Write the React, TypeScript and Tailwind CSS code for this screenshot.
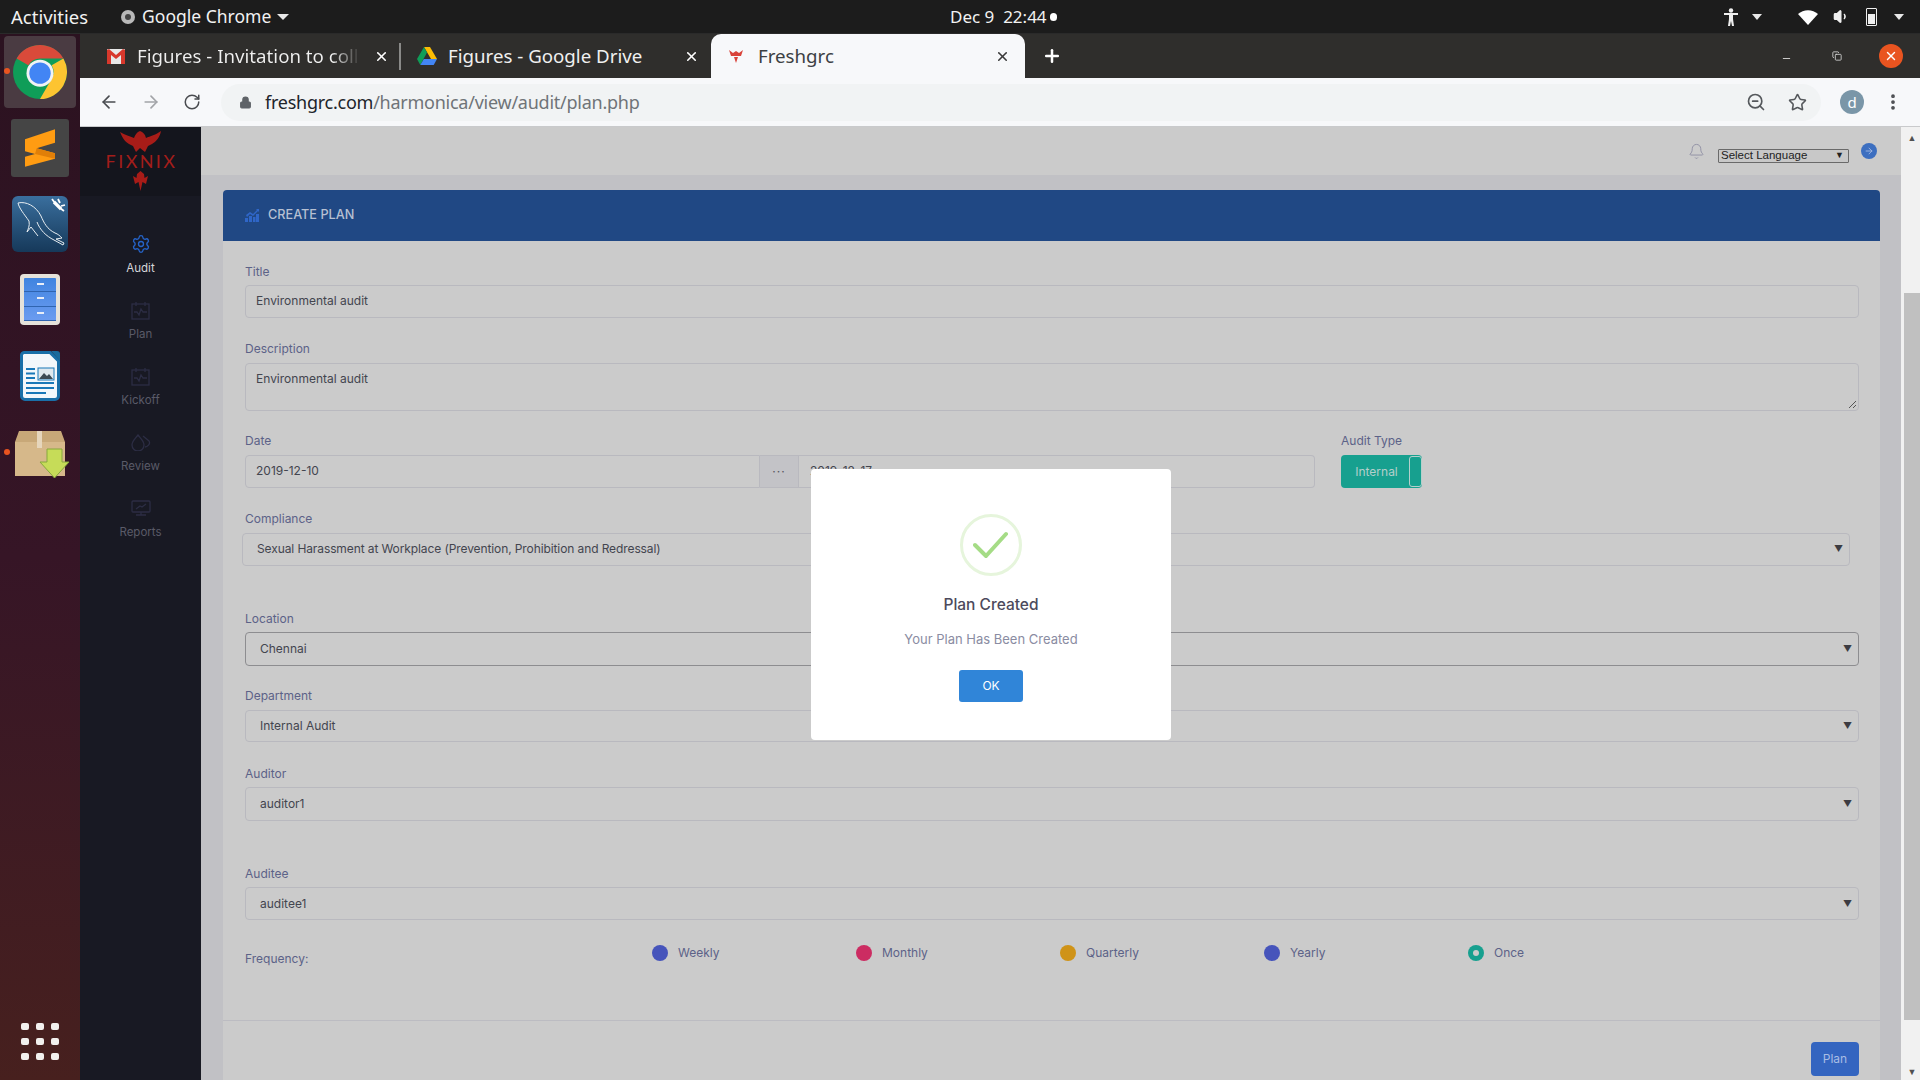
import React from "react";
import { ArrowLeft, ArrowRight, RotateCw, Lock, X, Plus, Star, ZoomOut, Bell, Settings, Volume1, Minus, Copy, MoreVertical } from "lucide-react";

const POP = "font-['Inter','Liberation_Sans',sans-serif]";

function ChromeLogo({ size }: { size: number }) {
  return (
    <svg width={size} height={size} viewBox="0 0 48 48">
      <circle cx="24" cy="24" r="24" fill="#0f9d58" />
      <path d="M44.8 12A24 24 0 0 1 24 48L34.4 30a12 12 0 0 0 0-12z" fill="#fdc431" />
      <path d="M24 0A24 24 0 0 1 44.800 12H24a12 12 0 0 0-10.400 6L3.200 12A24 24 0 0 1 24 0z" fill="#d94a3a" />
      <circle cx="24" cy="25" r="12" fill="#f1f3f4" />
      <circle cx="24" cy="25" r="9.500" fill="#4285f4" />
    </svg>
  );
}

function Dock() {
  return (
    <div className="w-[80px] shrink-0 flex flex-col items-center relative bg-gradient-to-b from-[#2b1220] via-[#361526] to-[#47201e]">
      <div className="mt-[2px] w-[72px] h-[72px] rounded-[4px] bg-[#4a3b42] flex items-center justify-center">
        <ChromeLogo size={54} />
      </div>
      <div className="absolute left-[4px] top-[34px] w-[6px] h-[6px] rounded-full bg-[#e95420]" />
      <div className="mt-[11px] w-[58px] h-[58px] rounded-[3px] bg-[#454545] flex items-center justify-center">
        <svg width="30" height="38" viewBox="0 0 90 112">
          <path d="M90 0L0 30V66L30 74L0 82V112L90 88V72L35 57L90 40z" fill="#ff9c12" />
          <path d="M35 57L90 72V88L30 74z" fill="#e07f08" />
        </svg>
      </div>
      <div className="mt-[19px] w-[56px] h-[56px] rounded-[6px] bg-gradient-to-b from-[#3a6f9e] to-[#16395a] relative">
        <svg width="56" height="56" viewBox="0 0 56 56" fill="none" stroke="#e8eef2" strokeWidth="1">
          <path d="M6 7C14 5 24 10 29 20C32 27 35 33 43 37C46 38 48 40 50 42L44 43L52 47L51 49L42 44C34 40 28 34 25 26" />
          <path d="M6 7C7 12 12 18 17 25C18 30 16 33 15 36L19 31L26 40" />
          <path d="M42 6l7 7" stroke="#fff" strokeWidth="3.200" />
          <path d="M40 3l3 4M52 15l-4-3M46 3l2 4M53 9l-4 1" stroke="#fff" strokeWidth="1.800" />
        </svg>
      </div>
      <div className="mt-[22px] w-[40px] h-[51px] rounded-[4px] bg-[#e5e2da] flex items-center justify-center">
        <div className="w-[32px] h-[43px] bg-gradient-to-b from-[#3f84e0] to-[#6b9cf0] flex flex-col rounded-[1px]">
          {[0, 1, 2].map((i) => (
            <div key={i} className="flex-1 border-b border-[#2f64b0] flex items-start justify-center pt-[5px]">
              <div className="w-[7px] h-[2px] bg-[#e8eef8]" />
            </div>
          ))}
        </div>
      </div>
      <div className="mt-[26px] w-[40px] h-[50px]">
        <svg width="40" height="50" viewBox="0 0 40 50">
          <path d="M4 1.500H30L38.500 10V45a3.500 3.500 0 0 1-3.500 3.500H5A3.500 3.500 0 0 1 1.500 45V4A3 3 0 0 1 4 1.500z" fill="#f3f7fb" stroke="#1a6fa8" strokeWidth="3" />
          <path d="M31 0h6a3 3 0 0 1 3 3v7z" fill="#1a6a9c" />
          <path d="M6 17h9v2H6zM6 21.500h9v2H6zM6 26h9v2H6zM6 31h28v2H6zM6 36h28v2H6zM6 41h20v2H6z" fill="#1a78b8" />
          <rect x="18" y="17" width="16" height="12" fill="#dfe8ee" stroke="#1a78b8" />
          <path d="M19 28l5-6 3 3 2-2 4 5z" fill="#3c4a54" />
        </svg>
      </div>
      <div className="absolute left-[4px] top-[415px] w-[6px] h-[6px] rounded-full bg-[#e95420]" />
      <div className="absolute left-[14px] top-[397px] w-[56px] h-[48px]">
        <svg width="56" height="48" viewBox="0 0 56 48">
          <path d="M1 11L5 0h42l4 11v34H1z" fill="#c8a878" />
          <path d="M1 11h50v34H1z" fill="#d6b88a" />
          <rect x="23" y="0" width="5" height="17" fill="#e6d6bc" />
          <path d="M33 18h15v13h7L40.500 47L26 31h7z" fill="#c6dc58" stroke="#86a83c" />
        </svg>
      </div>
      <div className="mt-auto mb-[20px] grid grid-cols-3 gap-x-[7px] gap-y-[8px]">
        {Array.from({ length: 9 }).map((_, i) => (
          <div key={i} className="w-[8px] h-[7px] rounded-[2px] bg-[#f2f0ee]" />
        ))}
      </div>
    </div>
  );
}

function TopBar() {
  return (
    <div className="h-[34px] shrink-0 bg-[#1c1c1c] text-[#f2f2f2] flex items-center text-[17.500px] font-['Noto_Sans',sans-serif] relative border-b border-[#2a2a2a]">
      <span className="ml-[11px] text-[18.500px]">Activities</span>
      <span className="ml-[33px] w-[14px] h-[14px] rounded-full bg-[#b9b9b9] flex items-center justify-center">
        <span className="w-[6px] h-[6px] rounded-full bg-[#444]" />
      </span>
      <span className="ml-[7px]">Google Chrome</span>
      <span className="ml-[6px] w-0 h-0 border-x-[6px] border-x-transparent border-t-[6px] border-t-[#e8e8e8]" />
      <div className="absolute left-[950px] top-0 h-full flex items-center text-[17px]">
        <span className="whitespace-pre">Dec 9  22:44</span>
        <span className="ml-[3px] w-[7px] h-[8px] rounded-full bg-white" />
      </div>
      <div className="ml-auto flex items-center text-[#efefef]">
        <svg width="14" height="18" viewBox="0 0 14 18" fill="#efefef" className="mr-[14px]">
          <circle cx="7" cy="2.500" r="2.200" />
          <path d="M0 5h14v2H9v4l1 7H8l-1-5-1 5H4l1-7V7H0z" />
        </svg>
        <span className="mr-[36px] w-0 h-0 border-x-[5px] border-x-transparent border-t-[6px] border-t-[#e8e8e8]" />
        <svg width="20" height="16" viewBox="0 0 20 16" fill="#fff" className="mr-[15px]">
          <path d="M0 5a15 15 0 0 1 20 0l-10 11z" />
        </svg>
        <Volume1 size={17} className="mr-[16px]" fill="#efefef" />
        <div className="mr-[17px] w-[11px] h-[18px] border-[1.500px] border-[#efefef] rounded-[1px] flex items-end p-[1px]">
          <div className="w-full h-[10px] bg-[#efefef]" />
        </div>
        <span className="mr-[16px] w-0 h-0 border-x-[5px] border-x-transparent border-t-[6px] border-t-[#e8e8e8]" />
      </div>
    </div>
  );
}

function TabStrip() {
  return (
    <div className="h-[44px] shrink-0 bg-[#2f2e2c] flex items-stretch pl-[16px] text-[18.700px] font-['Noto_Sans',sans-serif] text-[#f0f0f0] relative">
      <div className="w-[305px] flex items-center pl-[11px] pr-[12px]">
        <svg width="18" height="15" viewBox="0 0 18 15" className="shrink-0">
          <rect width="18" height="15" rx="1" fill="#e8e8e8" />
          <path d="M0 1v14h4V6l5 4 5-4v9h4V1l-2-1-7 6L2 0z" fill="#d8382c" />
        </svg>
        <span className="ml-[12px] whitespace-nowrap bg-clip-text text-transparent bg-gradient-to-r from-[#f0f0f0] from-[88%] to-[#3a3937]">Figures - Invitation to coll</span>
        <X size={15} strokeWidth={2.500} className="ml-auto shrink-0 text-white" />
      </div>
      <div className="w-[2px] h-[27px] self-center bg-[#8a8a88] -ml-[2px]" />
      <div className="w-[310px] flex items-center pl-[16px] pr-[12px]">
        <svg width="20" height="18" viewBox="0 0 20 18" className="shrink-0">
          <path d="M7 0h6l7 12h-6z" fill="#fbbc04" />
          <path d="M7 0l3 5.500L3.300 18 0 12z" fill="#0f9d58" />
          <path d="M3.300 18l3.500-6H20l-3.300 6z" fill="#4285f4" />
        </svg>
        <span className="ml-[11px] whitespace-nowrap">Figures - Google Drive</span>
        <X size={15} strokeWidth={2.500} className="ml-auto shrink-0 text-white" />
      </div>
      <div className="w-[314px] bg-[#f7f8fa] rounded-t-[10px] flex items-center pl-[18px] pr-[15px] text-[#3c4043]">
        <svg width="14" height="14" viewBox="0 0 14 14" className="shrink-0">
          <path d="M0 1l4 3 3-2 3 2 4-3-2 6H2zM5 8h4l-2 6z" fill="#d9433a" />
        </svg>
        <span className="ml-[15px]">Freshgrc</span>
        <X size={15} strokeWidth={2.500} className="ml-auto shrink-0 text-[#3a3a3a]" />
      </div>
      <Plus size={20} strokeWidth={3} className="self-center ml-[17px] text-white" />
      <div className="ml-auto flex items-center pr-[17px]">
        <Minus size={11} className="text-[#d8d8d8] mt-[5px] mr-[40px]" />
        <Copy size={10} className="text-[#d8d8d8] mr-[37px]" />
        <div className="w-[24px] h-[24px] rounded-full bg-[#e95420] flex items-center justify-center">
          <X size={14} strokeWidth={2.500} className="text-white" />
        </div>
      </div>
    </div>
  );
}

function AddressBar() {
  return (
    <div className="h-[49px] shrink-0 bg-[#f7f8fa] border-b border-[#c9cacc] flex items-center pl-[19px] font-['Noto_Sans',sans-serif]">
      <ArrowLeft size={20} strokeWidth={2} className="text-[#4a4c50]" />
      <ArrowRight size={20} strokeWidth={2} className="ml-[22px] text-[#a2a4a8]" />
      <RotateCw size={18} strokeWidth={2} className="ml-[22px] text-[#4a4c50]" />
      <div className="ml-[20px] w-[1600px] h-[37px] rounded-full bg-[#f1f3f4] flex items-center pl-[18px] pr-[14px]">
        <Lock size={13} fill="#5f6368" className="text-[#5f6368]" />
        <span className="ml-[13px] text-[18px] text-[#20242a] whitespace-nowrap tracking-[-0.250px]">
          freshgrc.com<span className="text-[#6f7478]">/harmonica/view/audit/plan.php</span>
        </span>
        <ZoomOut size={20} className="ml-auto text-[#55585c]" />
        <Star size={19} className="ml-[22px] text-[#55585c]" />
      </div>
      <div className="ml-[19px] w-[24px] h-[24px] rounded-full bg-[#7a96a8] text-white text-[15px] flex items-center justify-center">d</div>
      <MoreVertical size={20} strokeWidth={2.500} className="ml-[19px] text-[#4a4c50]" />
    </div>
  );
}

function Cal() {
  return (
    <svg width="19" height="19" viewBox="0 0 19 19" fill="none" stroke="#2c2d44" strokeWidth="1.300">
      <rect x="1" y="3" width="17" height="15" />
      <path d="M5 1v4M14 1v4M3 11h3l2 3 2-6 2 3h4" />
    </svg>
  );
}

function NavItem({ icon, label, active, cls }: { icon: React.ReactNode; label: string; active?: boolean; cls: string }) {
  return (
    <div className={`flex flex-col items-center ${cls}`}>
      <div className="h-[22px] flex items-center justify-center">{icon}</div>
      <span className={`mt-[6px] text-[11.500px] leading-[14px] ${POP} ${active ? "text-[#d5d6da]" : "text-[#5a5b68]"}`}>{label}</span>
    </div>
  );
}

function Sidebar() {
  return (
    <div className="w-[121px] shrink-0 bg-[#181923] flex flex-col">
      <div className="h-[69px] bg-[#14151d] flex flex-col items-center pt-[4px]">
        <svg width="41" height="21" viewBox="0 0 41 21" fill="#a81c18">
          <path d="M0 1C5 4 10 5 14 7C15 4 17 1 20 0C23 1 25 3 26 7C30 5 36 4 41 0C40 6 36 11 32 13L28 15L25 21L20 17L16 21L13 15L9 13C5 11 2 6 0 1z" />
        </svg>
        <span className="mt-[3px] text-[#a31d1a] text-[18px] leading-[13px] font-normal font-['Lato',sans-serif] tracking-[2.400px] pl-[2px]">FIXNIX</span>
        <svg width="15" height="20" viewBox="0 0 15 20" fill="#a81c18" className="mt-[3px]">
          <path d="M7.500 20L5.500 11L2 13L0 5L3.500 7L4 3L7.500 0L11 3L11.500 7L15 5L13 13L9.500 11z" />
        </svg>
      </div>
      <NavItem cls="mt-[37px]" active label="Audit" icon={<Settings size={20} strokeWidth={1.600} className="text-[#2563c8]" />} />
      <NavItem cls="mt-[24px]" label="Plan" icon={<Cal />} />
      <NavItem cls="mt-[24px]" label="Kickoff" icon={<Cal />} />
      <NavItem cls="mt-[24px]" label="Review" icon={
        <svg width="20" height="18" viewBox="0 0 20 18" fill="none" stroke="#2c2d44" strokeWidth="1.300">
          <path d="M7 2c3 4 6 6 6 10a6 6 0 0 1-12 0c0-4 3-6 6-10zM12 3l6 5c2 3-2 6-4 6" />
        </svg>
      } />
      <NavItem cls="mt-[24px]" label="Reports" icon={
        <svg width="20" height="16" viewBox="0 0 20 16" fill="none" stroke="#2c2d44" strokeWidth="1.300">
          <rect x="1" y="1" width="18" height="11" rx="1" />
          <path d="M5 9l4-3 2 1 4-3M10 12v3M5 15h10" />
        </svg>
      } />
    </div>
  );
}

function Lbl({ children, cls }: { children: React.ReactNode; cls?: string }) {
  return <div className={`h-[16px] text-[12px] leading-[16px] text-[#5c6288] ${cls ?? ""}`}>{children}</div>;
}

function Sel({ value, cls, arrow }: { value: string; cls: string; arrow?: string }) {
  return (
    <div className={`flex items-center rounded-[4px] border text-[12px] text-[#43454f] ${cls}`}>
      <span className="flex-1">{value}</span>
      <span className={`text-[9px] text-[#3c3c42] ${arrow ?? "mr-[6px]"}`}>▼</span>
    </div>
  );
}

function Radio({ color, label, checked }: { color: string; label: string; checked?: boolean }) {
  return (
    <div className="w-[204px] flex items-center">
      <span className={`w-[16px] h-[16px] rounded-full flex items-center justify-center ${color}`}>
        {checked && <span className="w-[6px] h-[6px] rounded-full bg-[#cbcbcb]" />}
      </span>
      <span className="ml-[10px] text-[12px] leading-[16px] text-[#5c6288]">{label}</span>
    </div>
  );
}

function Form() {
  const border = "border-[#b9b9bf]";
  return (
    <div className={`flex-1 min-h-0 overflow-hidden bg-[#c1c1c5] pl-[22px] pr-[21px] pt-[15px] ${POP}`}>
      <div className="bg-[#cbcbcb] rounded-t-[4px] h-[1000px]">
        <div className="h-[51px] rounded-t-[4px] bg-[#204884] flex items-center pl-[22px]">
          <svg width="14" height="13" viewBox="0 0 14 13" fill="#2f66c8">
            <path d="M0 9h3v4H0zM4 7h3v6H4zM8 8h2.500v5H8zM11 5h3v8h-3zM1 6l4-3 3 2 4-4-1-1h3v3l-1-1-5 5-3-2-3 3z" />
          </svg>
          <span className="ml-[9px] mb-[1px] text-[12.700px] font-medium text-[#b7c0d2]">CREATE PLAN</span>
        </div>
        <div className="pl-[22px] pr-[21px]">
          <Lbl cls="mt-[23px]">Title</Lbl>
          <div className={`mt-[5px] h-[33px] pb-[2px] rounded-[4px] border ${border} flex items-center pl-[10px] text-[12px] text-[#43454f]`}>Environmental audit</div>

          <Lbl cls="mt-[23px]">Description</Lbl>
          <div className={`mt-[6px] h-[48px] rounded-[4px] border ${border} pl-[10px] pt-[7px] text-[12px] leading-[16px] text-[#43454f] relative`}>
            Environmental audit
            <svg width="9" height="9" viewBox="0 0 9 9" stroke="#555" className="absolute right-[1px] bottom-[1px]">
              <path d="M1 8l7-7M5 8l3-3" />
            </svg>
          </div>

          <div className="mt-[22px] flex">
            <div className="w-[1070px]">
              <Lbl>Date</Lbl>
              <div className="mt-[6px] flex h-[33px]">
                <div className={`w-[515px] pb-[2px] rounded-l-[4px] border ${border} flex items-center pl-[10px] text-[12px] text-[#43454f]`}>2019-12-10</div>
                <div className={`w-[39px] border-y border-r ${border} bg-[#c3c3c7] flex items-center justify-center text-[#55555f] text-[12px] tracking-[1px]`}>···</div>
                <div className={`w-[516px] pb-[2px] rounded-r-[4px] border-y border-r ${border} flex items-center pl-[11px] text-[12px] text-[#43454f]`}>2019-12-17</div>
              </div>
            </div>
            <div className="ml-[26px]">
              <Lbl>Audit Type</Lbl>
              <div className="mt-[6px] h-[33px] w-[81px] rounded-[4px] bg-[#17a08f] flex">
                <span className="flex-1 flex items-center justify-center text-[12px] text-[#b5cfcb] pl-[4px]">Internal</span>
                <span className="w-[13px] m-[1px] mr-0 rounded-[3px] border border-[#b5cfcb]" />
              </div>
            </div>
          </div>

          <Lbl cls="mt-[23px]">Compliance</Lbl>
          <Sel
            value="Sexual Harassment at Workplace (Prevention, Prohibition and Redressal)"
            cls={`mt-[6px] h-[33px] pb-[2px] -ml-[3px] mr-[9px] pl-[14px] tracking-[-0.100px] ${border}`}
          />

          <Lbl cls="mt-[45px]">Location</Lbl>
          <Sel value="Chennai" cls="mt-[5px] h-[34px] pl-[14px] border-[#8d8d90]" />

          <Lbl cls="mt-[22px]">Department</Lbl>
          <Sel value="Internal Audit" cls={`mt-[6px] h-[32px] pl-[14px] ${border}`} />

          <Lbl cls="mt-[24px]">Auditor</Lbl>
          <Sel value="auditor1" cls={`mt-[5px] h-[34px] pl-[14px] ${border}`} />

          <Lbl cls="mt-[45px]">Auditee</Lbl>
          <Sel value="auditee1" cls={`mt-[5px] h-[33px] pl-[14px] ${border}`} />

          <div className="mt-[25px] flex items-start h-[75px]">
            <div className="w-[407px] pt-[6px]"><Lbl>Frequency:</Lbl></div>
            <Radio color="bg-[#4654bb]" label="Weekly" />
            <Radio color="bg-[#cc2c62]" label="Monthly" />
            <Radio color="bg-[#cf9318]" label="Quarterly" />
            <Radio color="bg-[#4654bb]" label="Yearly" />
            <Radio color="bg-[#17a08f]" label="Once" checked />
          </div>
        </div>
        <div className="border-t border-[#bcbcc2] pt-[21px] pr-[21px] flex justify-end">
          <div className="w-[48px] h-[34px] rounded-[4px] bg-[#3465c0] flex items-center justify-center text-[12px] text-[#a9bde4]">Plan</div>
        </div>
      </div>
    </div>
  );
}

function Modal() {
  return (
    <div className={`absolute left-[811px] top-[469px] w-[360px] h-[271px] bg-white rounded-[4px] flex flex-col items-center ${POP}`}>
      <div className="mt-[45px] w-[62px] h-[62px] rounded-full border-[3px] border-[#e6f5dc] flex items-center justify-center">
        <svg width="36" height="28" viewBox="0 0 36 28" fill="none" stroke="#a5dc86" strokeWidth="4" strokeLinecap="round" strokeLinejoin="round">
          <path d="M2 14l11 11L33 3" />
        </svg>
      </div>
      <div className="mt-[18px] text-[15.500px] leading-[22px] font-medium text-[#4c4a5c]">Plan Created</div>
      <div className="mt-[14px] text-[13px] leading-[18px] text-[#8a8ca2]">Your Plan Has Been Created</div>
      <div className="mt-[22px] w-[64px] h-[32px] rounded-[3px] bg-[#3085d8] text-white text-[12px] flex items-center justify-center">OK</div>
    </div>
  );
}

function Scrollbar() {
  return (
    <div className="w-[19px] shrink-0 bg-[#f1f1f1] flex flex-col items-end">
      <div className="w-[16px] h-[22px] flex items-center justify-center text-[9px] text-[#505050]">▲</div>
      <div className="w-[16px] mt-[144px] h-[727px] bg-[#c0c0c0]" />
      <div className="w-[16px] flex-1 flex items-end justify-center pb-[2px] text-[9px] leading-[12px] text-[#505050]">▼</div>
    </div>
  );
}

export default function App() {
  return (
    <div className="relative w-[1920px] h-[1080px] overflow-hidden flex flex-col">
      <TopBar />
      <div className="flex flex-1 min-h-0">
        <Dock />
        <div className="flex-1 min-w-0 flex flex-col">
          <TabStrip />
          <AddressBar />
          <div className="flex flex-1 min-h-0">
            <Sidebar />
            <div className="flex-1 min-w-0 flex flex-col">
              <div className="h-[48px] shrink-0 bg-[#cbcbcb] flex items-center justify-end pr-[24px]">
                <Bell size={17} strokeWidth={1.300} className="text-[#8f8fa4]" />
                <div className="ml-[13px] mt-[10px] w-[131px] h-[14px] border border-[#6a6a6a] rounded-[1px] bg-[#c8c8c8] flex items-center pl-[2px] text-[11.500px] text-[#222] font-['Liberation_Sans',sans-serif]">
                  <span className="flex-1">Select Language</span>
                  <span className="text-[9px] mr-[4px]">▼</span>
                </div>
                <div className="ml-[12px] w-[16px] h-[16px] rounded-full bg-[#3d6fc0] flex items-center justify-center">
                  <ArrowRight size={10} className="text-[#a9bde4]" />
                </div>
              </div>
              <Form />
            </div>
            <Scrollbar />
          </div>
        </div>
      </div>
      <Modal />
    </div>
  );
}
